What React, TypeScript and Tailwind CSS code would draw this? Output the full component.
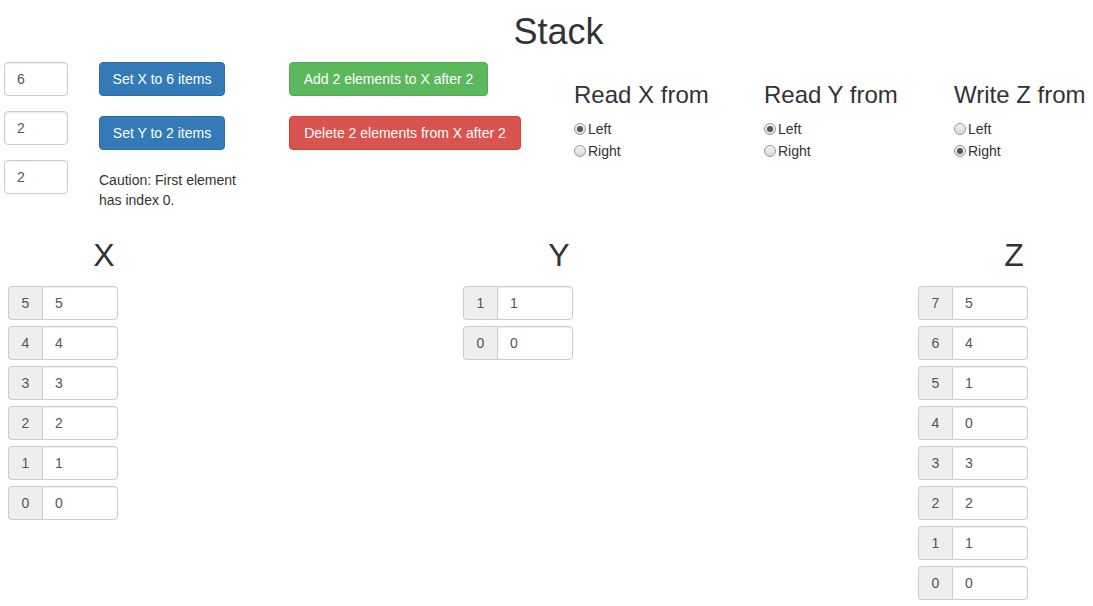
import React from 'react';

/* ─── Data ─── */

const xItems = [5, 4, 3, 2, 1, 0];
const yItems = [1, 0];
const zItems = [5, 4, 1, 0, 3, 2, 1, 0];

const radioGroups = [
  { title: 'Read X from', checked: 'Left' },
  { title: 'Read Y from', checked: 'Left' },
  { title: 'Write Z from', checked: 'Right' },
];

/* ─── Pieces ─── */

function Radio({ label, checked }: { label: string; checked: boolean }) {
  return (
    <label className="flex items-center h-[20px] text-[14px] leading-[20px] text-[#333]">
      <span className="mr-[2px] flex h-[12px] w-[12px] items-center justify-center rounded-full border border-[#9a9a9a] bg-gradient-to-b from-[#f2f2f2] to-[#d8d8d8]">
        {checked && <span className="h-[6px] w-[6px] rounded-full bg-[#555]" />}
      </span>
      {label}
    </label>
  );
}

function StackColumn({ name, values }: { name: string; values: number[] }) {
  const top = values.length - 1;
  return (
    <div className="w-[192px] shrink-0">
      <h2 className="text-center text-[32px] leading-[1.1] text-[#333] h-[35px]">{name}</h2>
      <div className="mt-[13px] flex flex-col gap-[6px]">
        {values.map((v, i) => (
          <div key={i} className="flex h-[34px] w-[110px] text-[14px] text-[#555]">
            <span className="flex w-[34px] items-center justify-center rounded-l-[4px] border border-r-0 border-[#ccc] bg-[#eee]">
              {top - i}
            </span>
            <span className="flex flex-1 items-center rounded-r-[4px] border border-[#ccc] bg-white pl-[12px] shadow-[inset_0_1px_1px_rgba(0,0,0,0.075)]">
              {v}
            </span>
          </div>
        ))}
      </div>
    </div>
  );
}

/* ─── Component ─── */

export default function App() {
  return (
    <div className="h-[606px] w-full overflow-hidden bg-white font-['Liberation_Sans',Arial,sans-serif] text-[#333]">
      <h1 className="pt-[12px] pl-[24px] text-center text-[36px] leading-[1.1] h-[51px]">Stack</h1>

      <div className="mt-[11px] flex pl-[4px]">
        <div className="flex w-[64px] shrink-0 flex-col gap-[15px]">
          {['6', '2', '2'].map((v, i) => (
            <div
              key={i}
              className="flex h-[34px] items-center rounded-[4px] border border-[#ccc] bg-white pl-[12px] text-[14px] text-[#555] shadow-[inset_0_1px_1px_rgba(0,0,0,0.075)]"
            >
              {v}
            </div>
          ))}
        </div>

        <div className="ml-[31px] flex w-[190px] shrink-0 flex-col items-start">
          <button className="h-[34px] w-[126px] rounded-[4px] border border-[#2e6da4] bg-[#337ab7] text-[14px] text-white">
            Set X to 6 items
          </button>
          <button className="mt-[20px] h-[34px] w-[126px] rounded-[4px] border border-[#2e6da4] bg-[#337ab7] text-[14px] text-white">
            Set Y to 2 items
          </button>
          <p className="mt-[20px] w-[150px] text-[14px] leading-[20px] text-[#333]">
            Caution: First element has index 0.
          </p>
        </div>

        <div className="flex w-[285px] shrink-0 flex-col items-start">
          <button className="h-[34px] w-[199px] rounded-[4px] border border-[#4cae4c] bg-[#5cb85c] text-[14px] text-white">
            Add 2 elements to X after 2
          </button>
          <button className="mt-[20px] h-[34px] w-[232px] rounded-[4px] border border-[#d43f3a] bg-[#d9534f] text-[14px] text-white">
            Delete 2 elements from X after 2
          </button>
        </div>

        {radioGroups.map((g) => (
          <div key={g.title} className="w-[190px] shrink-0 pt-[20px]">
            <h3 className="text-[24px] leading-[1.1] text-[#333] h-[26px] whitespace-nowrap">{g.title}</h3>
            <div className="mt-[11px] flex flex-col gap-[2px]">
              <Radio label="Left" checked={g.checked === 'Left'} />
              <Radio label="Right" checked={g.checked === 'Right'} />
            </div>
          </div>
        ))}
      </div>

      <div className="mt-[28px] flex gap-[263px] pl-[8px]">
        <StackColumn name="X" values={xItems} />
        <StackColumn name="Y" values={yItems} />
        <StackColumn name="Z" values={zItems} />
      </div>
    </div>
  );
}
